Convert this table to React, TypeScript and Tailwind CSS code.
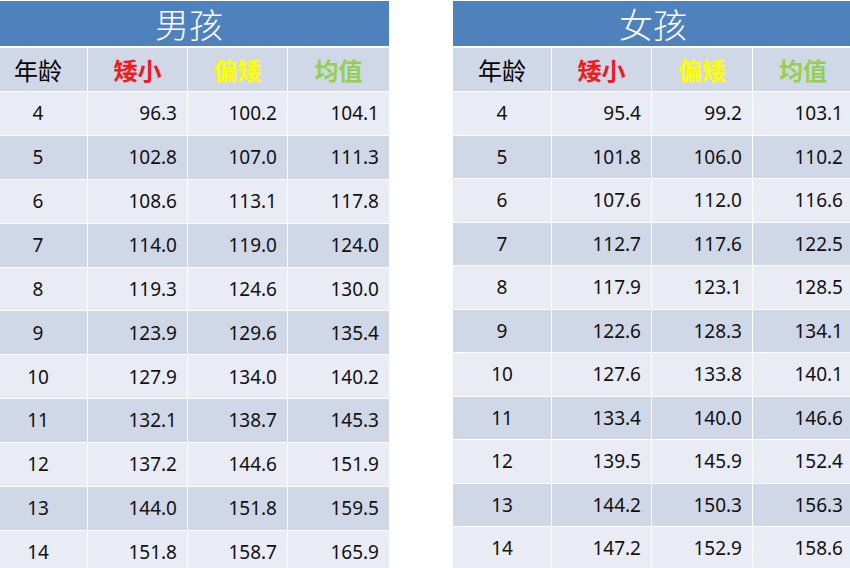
import React from "react"

type Row = [number, string, string, string]

const boys: Row[] = [
  [4, "96.3", "100.2", "104.1"],
  [5, "102.8", "107.0", "111.3"],
  [6, "108.6", "113.1", "117.8"],
  [7, "114.0", "119.0", "124.0"],
  [8, "119.3", "124.6", "130.0"],
  [9, "123.9", "129.6", "135.4"],
  [10, "127.9", "134.0", "140.2"],
  [11, "132.1", "138.7", "145.3"],
  [12, "137.2", "144.6", "151.9"],
  [13, "144.0", "151.8", "159.5"],
  [14, "151.8", "158.7", "165.9"],
]

const girls: Row[] = [
  [4, "95.4", "99.2", "103.1"],
  [5, "101.8", "106.0", "110.2"],
  [6, "107.6", "112.0", "116.6"],
  [7, "112.7", "117.6", "122.5"],
  [8, "117.9", "123.1", "128.5"],
  [9, "122.6", "128.3", "134.1"],
  [10, "127.6", "133.8", "140.1"],
  [11, "133.4", "140.0", "146.6"],
  [12, "139.5", "145.9", "152.4"],
  [13, "144.2", "150.3", "156.3"],
  [14, "147.2", "152.9", "158.6"],
]

const cjk = "font-['Microsoft_YaHei','Noto_Sans_CJK_SC',sans-serif]"
const num = "font-['Noto_Sans','Noto_Sans_CJK_SC',sans-serif]"

function Table({ title, rows, cols, rowH }: { title: string; rows: Row[]; cols: string; rowH: string }) {
  return (
    <div className="w-[400px] shrink-0 flex flex-col">
      <div className={`mt-px h-[45px] bg-[#4f81bd] text-white flex items-center justify-center text-[34px] font-light ${cjk}`}>
        {title}
      </div>
      <div className={`mt-[2px] grid ${cols} gap-x-px gap-y-px bg-white`}>
        <div className={`h-[43px] bg-[#d0d8e8] flex items-center justify-center text-[24px] text-black ${cjk}`}>年龄</div>
        <div className={`h-[43px] bg-[#d0d8e8] flex items-center justify-center text-[24px] font-bold text-[#ee1c1c] ${cjk}`}>矮小</div>
        <div className={`h-[43px] bg-[#d0d8e8] flex items-center justify-center text-[24px] font-bold text-[#ffff00] ${cjk}`}>偏矮</div>
        <div className={`h-[43px] bg-[#d0d8e8] flex items-center justify-center text-[24px] font-bold text-[#92d050] ${cjk}`}>均值</div>
        {rows.map((r, i) => {
          const bg = i % 2 === 0 ? "bg-[#e9ecf4]" : "bg-[#d0d7e7]"
          return (
            <React.Fragment key={r[0]}>
              <div className={`${rowH} ${bg} flex items-center justify-center text-[19px] text-[#111] ${num}`}>{r[0]}</div>
              <div className={`${rowH} ${bg} flex items-center justify-end pr-[10px] text-[19px] text-[#111] ${num}`}>{r[1]}</div>
              <div className={`${rowH} ${bg} flex items-center justify-end pr-[10px] text-[19px] text-[#111] ${num}`}>{r[2]}</div>
              <div className={`${rowH} ${bg} flex items-center justify-end pr-[10px] text-[19px] text-[#111] ${num}`}>{r[3]}</div>
            </React.Fragment>
          )
        })}
      </div>
    </div>
  )
}

export default function App() {
  return (
    <div className="w-[850px] h-[568px] overflow-hidden bg-white flex">
      <div className="-ml-[11px]">
        <Table title="男孩" rows={boys} cols="grid-cols-[98px_99px_99px_101px]" rowH="h-[42.9px]" />
      </div>
      <div className="ml-[64px]">
        <Table title="女孩" rows={girls} cols="grid-cols-[98px_99px_100px_100px]" rowH="h-[42.5px]" />
      </div>
    </div>
  )
}
